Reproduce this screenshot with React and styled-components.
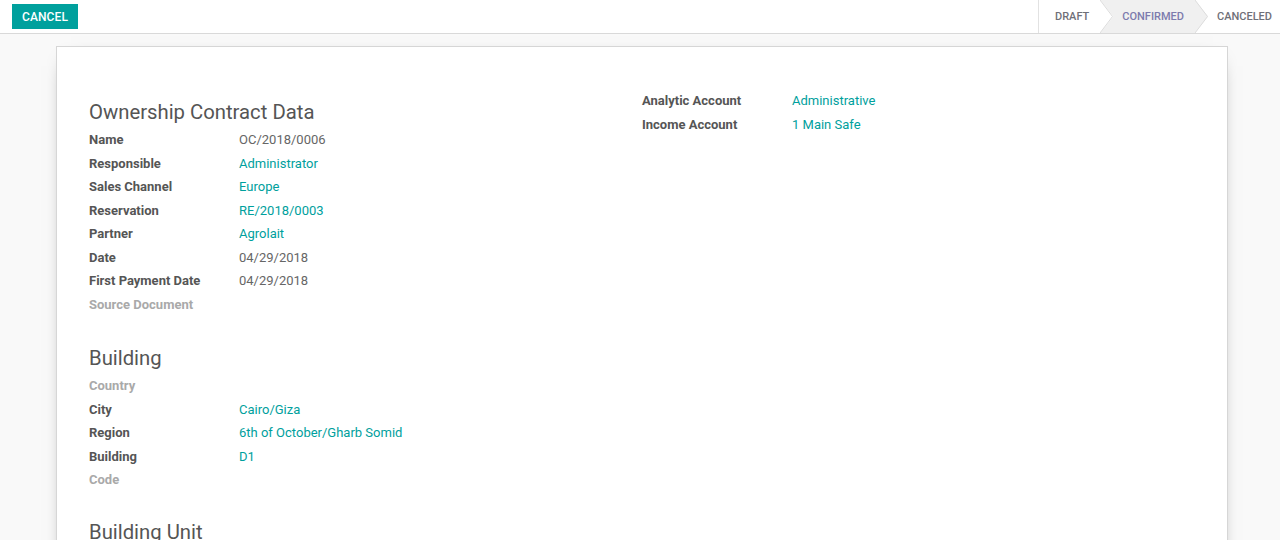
import React from "react";
import styled, { createGlobalStyle, css } from "styled-components";

const Global = createGlobalStyle`
  html, body { margin: 0; padding: 0; }
  body {
    font-family: Roboto, "Noto Sans", sans-serif;
    font-size: 13px;
    color: #4c4c4c;
    background: #f9f9f9;
    overflow: hidden;
  }
`;

const Page = styled.div`
  width: 1280px;
  height: 540px;
  display: flex;
  flex-direction: column;
  background: #f9f9f9;
`;

const TopBar = styled.div`
  height: 33px;
  flex: none;
  display: flex;
  align-items: center;
  justify-content: space-between;
  background: #fff;
  border-bottom: 1px solid #d9d9d9;
`;

const CancelButton = styled.button`
  margin-left: 12px;
  height: 25px;
  padding: 0 10px;
  border: none;
  border-radius: 0;
  background: #00a09d;
  color: #fff;
  font-family: Roboto, sans-serif;
  font-size: 12px;
  font-weight: 500;
  letter-spacing: 0.1px;
  text-transform: uppercase;
`;

const StatusBar = styled.div`
  display: flex;
  align-self: stretch;
  border-left: 1px solid #e2e2e2;
`;

const Step = styled.div`
  position: relative;
  display: flex;
  align-items: center;
  padding: 0 ${(p) => (p.$last ? "8px" : "11px")} 0 ${(p) => (p.$first ? "16px" : "22px")};
  font-size: 11px;
  font-weight: 500;
  text-transform: uppercase;
  color: ${(p) => (p.$active ? "#7c7bad" : "#6f6f78")};
  ${(p) =>
    p.$active &&
    css`
      &::before {
        content: "";
        position: absolute;
        top: 0;
        bottom: 0;
        left: 0;
        right: -13px;
        background: #f0f0f0;
        clip-path: polygon(0 0, calc(100% - 13px) 0, 100% 50%, calc(100% - 13px) 100%, 0 100%, 13px 50%);
      }
    `}
  span { position: relative; z-index: 1; }
`;

const Chevron = styled.svg`
  position: absolute;
  right: -13px;
  top: 0;
  width: 13px;
  height: 33px;
  z-index: 2;
`;

const Body = styled.div`
  flex: 1;
  padding: 12px 52px 0 56px;
  overflow: hidden;
`;

const Sheet = styled.div`
  background: #fff;
  border: 1px solid #d6d6d6;
  box-shadow: 0 5px 20px -15px #000;
  min-height: 600px;
  padding: 42px 32px 0 32px;
  display: grid;
  grid-template-columns: 1fr 1fr;
`;

const Column = styled.div`
  display: flex;
  flex-direction: column;
`;

const Section = styled.div`
  display: flex;
  flex-direction: column;
  margin-top: ${(p) => p.$mt || "0px"};
`;

const Title = styled.div`
  font-size: 20.3px;
  line-height: 30px;
  color: #555;
  margin-bottom: 1px;
`;

const Row = styled.div`
  display: grid;
  grid-template-columns: 150px 1fr;
  line-height: 19.5px;
  padding: 2px 0;
`;

const Label = styled.div`
  font-weight: 700;
  color: ${(p) => (p.$empty ? "#a9a9a9" : "#555")};
`;

const Value = styled.div`
  color: ${(p) => (p.$link ? "#00a09d" : "#666")};
`;

const Field = ({ label, value, link }) => (
  <Row>
    <Label $empty={!value}>{label}</Label>
    <Value $link={link}>{value}</Value>
  </Row>
);

const steps = [
  { name: "Draft" },
  { name: "Confirmed", active: true },
  { name: "Canceled" },
];

export default function App() {
  return (
    <>
      <Global />
      <Page>
        <TopBar>
          <CancelButton>Cancel</CancelButton>
          <StatusBar>
            {steps.map((s, i) => (
              <Step
                key={s.name}
                $first={i === 0}
                $last={i === steps.length - 1}
                $active={s.active}
              >
                <span>{s.name}</span>
                {i < steps.length - 1 && (
                  <Chevron viewBox="0 0 13 33">
                    <polyline points="0,0 12.5,16.5 0,33" fill="none" stroke="#dcdcdc" strokeWidth="1" />
                  </Chevron>
                )}
              </Step>
            ))}
          </StatusBar>
        </TopBar>
        <Body>
          <Sheet>
            <Column>
              <Section $mt="8px">
                <Title>Ownership Contract Data</Title>
                <Field label="Name" value="OC/2018/0006" />
                <Field label="Responsible" value="Administrator" link />
                <Field label="Sales Channel" value="Europe" link />
                <Field label="Reservation" value="RE/2018/0003" link />
                <Field label="Partner" value="Agrolait" link />
                <Field label="Date" value="04/29/2018" />
                <Field label="First Payment Date" value="04/29/2018" />
                <Field label="Source Document" />
              </Section>
              <Section $mt="27px">
                <Title>Building</Title>
                <Field label="Country" />
                <Field label="City" value="Cairo/Giza" link />
                <Field label="Region" value="6th of October/Gharb Somid" link />
                <Field label="Building" value="D1" link />
                <Field label="Code" />
              </Section>
              <Section $mt="25px">
                <Title>Building Unit</Title>
              </Section>
            </Column>
            <Column>
              <Section>
                <Field label="Analytic Account" value="Administrative" link />
                <Field label="Income Account" value="1 Main Safe" link />
              </Section>
            </Column>
          </Sheet>
        </Body>
      </Page>
    </>
  );
}
